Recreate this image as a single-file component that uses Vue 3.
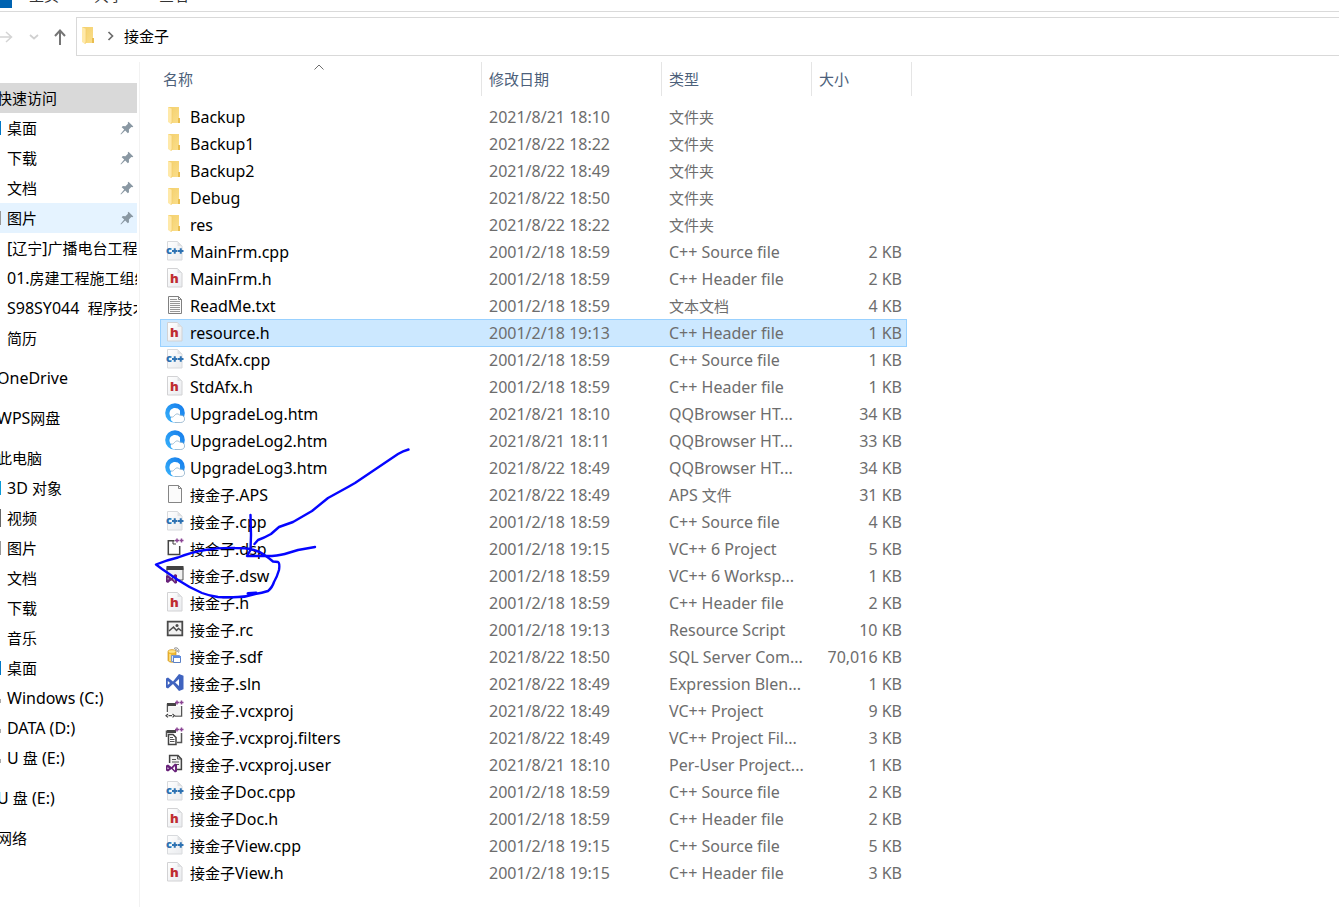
<script setup>
import { h } from 'vue'

const CJK = /([\u3000-\u9fff\uff00-\uffef]+)/

const Label = (props) =>
  h(
    'span',
    { class: 'label' },
    props.text
      .split(CJK)
      .filter((part) => part)
      .map((part) => h('span', { class: CJK.test(part) ? 'han' : 'latin' }, part))
  )
Label.props = ['text']

const places = [
  { text: '快速访问', root: true, state: 'current' },
  { text: '桌面', edge: 'blue', pin: true },
  { text: '下载', pin: true },
  { text: '文档', pin: true },
  { text: '图片', edge: 'grey', pin: true, state: 'hover' },
  { text: '[辽宁]广播电台工程施工' },
  { text: '01.房建工程施工组织设计' },
  { text: 'S98SY044  程序技术文件' },
  { text: '简历' },
  { text: 'OneDrive', root: true, gap: true },
  { text: 'WPS网盘', root: true, gap: true },
  { text: '此电脑', root: true, gap: true },
  { text: '3D 对象', edge: 'cyan' },
  { text: '视频', edge: 'dark' },
  { text: '图片', edge: 'grey' },
  { text: '文档' },
  { text: '下载' },
  { text: '音乐' },
  { text: '桌面', edge: 'blue' },
  { text: 'Windows (C:)', edge: 'drive' },
  { text: 'DATA (D:)', edge: 'drive' },
  { text: 'U 盘 (E:)', edge: 'drive' },
  { text: 'U 盘 (E:)', root: true, gap: true },
  { text: '网络', root: true, gap: true }
]

const columns = [
  { text: '名称', key: 'name' },
  { text: '修改日期', key: 'date' },
  { text: '类型', key: 'type' },
  { text: '大小', key: 'size' }
]

const files = [
  ['folder', 'Backup', '2021/8/21 18:10', '文件夹', ''],
  ['folder', 'Backup1', '2021/8/22 18:22', '文件夹', ''],
  ['folder', 'Backup2', '2021/8/22 18:49', '文件夹', ''],
  ['folder', 'Debug', '2021/8/22 18:50', '文件夹', ''],
  ['folder', 'res', '2021/8/22 18:22', '文件夹', ''],
  ['cpp', 'MainFrm.cpp', '2001/2/18 18:59', 'C++ Source file', '2 KB'],
  ['header', 'MainFrm.h', '2001/2/18 18:59', 'C++ Header file', '2 KB'],
  ['text', 'ReadMe.txt', '2001/2/18 18:59', '文本文档', '4 KB'],
  ['header', 'resource.h', '2001/2/18 19:13', 'C++ Header file', '1 KB'],
  ['cpp', 'StdAfx.cpp', '2001/2/18 18:59', 'C++ Source file', '1 KB'],
  ['header', 'StdAfx.h', '2001/2/18 18:59', 'C++ Header file', '1 KB'],
  ['browser', 'UpgradeLog.htm', '2021/8/21 18:10', 'QQBrowser HT...', '34 KB'],
  ['browser', 'UpgradeLog2.htm', '2021/8/21 18:11', 'QQBrowser HT...', '33 KB'],
  ['browser', 'UpgradeLog3.htm', '2021/8/22 18:49', 'QQBrowser HT...', '34 KB'],
  ['blank', '接金子.APS', '2021/8/22 18:49', 'APS 文件', '31 KB'],
  ['cpp', '接金子.cpp', '2001/2/18 18:59', 'C++ Source file', '4 KB'],
  ['dsp', '接金子.dsp', '2001/2/18 19:15', 'VC++ 6 Project', '5 KB'],
  ['dsw', '接金子.dsw', '2001/2/18 18:59', 'VC++ 6 Worksp...', '1 KB'],
  ['header', '接金子.h', '2001/2/18 18:59', 'C++ Header file', '2 KB'],
  ['resource', '接金子.rc', '2001/2/18 19:13', 'Resource Script', '10 KB'],
  ['database', '接金子.sdf', '2021/8/22 18:50', 'SQL Server Com...', '70,016 KB'],
  ['solution', '接金子.sln', '2021/8/22 18:49', 'Expression Blen...', '1 KB'],
  ['project', '接金子.vcxproj', '2021/8/22 18:49', 'VC++ Project', '9 KB'],
  ['filters', '接金子.vcxproj.filters', '2021/8/22 18:49', 'VC++ Project Fil...', '3 KB'],
  ['user', '接金子.vcxproj.user', '2021/8/21 18:10', 'Per-User Project...', '1 KB'],
  ['cpp', '接金子Doc.cpp', '2001/2/18 18:59', 'C++ Source file', '2 KB'],
  ['header', '接金子Doc.h', '2001/2/18 18:59', 'C++ Header file', '2 KB'],
  ['cpp', '接金子View.cpp', '2001/2/18 19:15', 'C++ Source file', '5 KB'],
  ['header', '接金子View.h', '2001/2/18 19:15', 'C++ Header file', '3 KB']
].map(([icon, name, date, type, size]) => ({ icon, name, date, type, size }))

const selected = 'resource.h'
</script>

<template>
  <div class="explorer">
    <svg class="sprite" aria-hidden="true">
      <defs>
        <linearGradient id="g-folder" x1="0" x2="1" y1="0" y2="1">
          <stop offset="0" stop-color="#f3cf6c" />
          <stop offset="1" stop-color="#fbdf8c" />
        </linearGradient>
        <linearGradient id="g-sheet" x1="0" x2="1" y1="0" y2="1">
          <stop offset="0" stop-color="#ffffff" />
          <stop offset="1" stop-color="#e9ebee" />
        </linearGradient>
        <linearGradient id="g-q" x1="0" x2="1" y1="1" y2="0">
          <stop offset="0" stop-color="#39b4fb" />
          <stop offset="1" stop-color="#1378ea" />
        </linearGradient>
      </defs>
      <symbol id="folder" viewBox="0 0 20 20">
        <path d="M3 1h11v11h1v5H5z" fill="url(#g-folder)" />
        <path d="M13 12h2v5h-2z" fill="#e9bd50" />
        <path d="M3 1l4 2v13l-1 2-3-2z" fill="#ffe9a9" />
        <path d="M7 3v13l-1 2" fill="none" stroke="#f3cd68" stroke-width=".7" />
      </symbol>
      <symbol id="cpp" viewBox="0 0 20 20">
        <path d="M2.500.5h10l4.500 4.500v14H2.500z" fill="url(#g-sheet)" stroke="#d8dadd" />
        <path d="M12.500.5V5H17z" fill="#dfe1e4" />
        <text x="1" y="13" font-family="Open Sans, sans-serif" font-weight="800" font-size="11" fill="#2e72b2">c</text>
        <path d="M7 10h5.500M9.750 7.200v5.600M13 10h5.500M15.750 7.200v5.600" stroke="#2e72b2" stroke-width="2" />
      </symbol>
      <symbol id="header" viewBox="0 0 20 20">
        <path d="M2.500.5h10l4.500 4.500v14H2.500z" fill="url(#g-sheet)" stroke="#d2d2d4" />
        <path d="M12.500.5V5H17z" fill="#dfe1e4" />
        <text x="5" y="15" font-family="Open Sans, sans-serif" font-weight="800" font-size="13" fill="#bf2c31">h</text>
      </symbol>
      <symbol id="text" viewBox="0 0 20 20">
        <path d="M3.500 1.500h10l3 3v14h-13z" fill="#fbfbfb" stroke="#808080" />
        <path d="M13.500 1.500v3h3" fill="none" stroke="#808080" />
        <path d="M5 4.500h7M5 6.500h10M5 8.500h10M5 10.500h10M5 12.500h10M5 14.500h10M5 16.500h10" stroke="#979797" />
      </symbol>
      <symbol id="blank" viewBox="0 0 20 20">
        <path d="M3.500 1.500h10l3 3v14h-13z" fill="#fbfbfb" stroke="#858585" />
        <path d="M13.500 1.500v3h3" fill="none" stroke="#858585" />
      </symbol>
      <symbol id="browser" viewBox="0 0 20 20">
        <circle cx="10" cy="10" r="9.800" fill="url(#g-q)" />
        <path d="M10 5c-3.200 0-5.500 2.300-5.500 5.200 0 3.300 2.500 5.600 5.500 5.600h5V7.500C13.800 5.800 12 5 10 5z" fill="#fff" />
        <path d="M6 14.300c3 1.500 3.400-3 6-3.200 1.700-.1 2.200 1.400 3.800 1.300 2.200 0 3.800 1.500 3.800 3.700s-1.700 3.500-3.800 3.500H9.500C7 19 5 17 6 14.300z" fill="#fff" />
        <path d="M6 13.800c2.800 1.500 3.400-2.700 6-2.900 1.700-.1 2.200 1.400 3.800 1.300 2.200 0 3.800 1.500 3.800 3.700s-1.700 3.600-3.800 3.600h-6" fill="none" stroke="#8daec9" stroke-width=".8" />
      </symbol>
      <symbol id="dsp" viewBox="0 0 20 20">
        <path d="M9.500 2.800H3.300v13.700h11.400V8" fill="none" stroke="#444" stroke-width="1.500" />
        <path d="M8 2v4h3" fill="none" stroke="#444" />
        <path d="M10 2.500h4M12 .5v4M14.500 2.500h4M16.500.5v4" stroke="#8b4594" stroke-width="1.500" />
      </symbol>
      <symbol id="dsw" viewBox="0 0 20 20">
        <path d="M2 2.500h16v12.500H2z" fill="#f1f1f1" stroke="#555" />
        <path d="M1.500 1h17v4h-17z" fill="#424242" />
        <path d="M1 11l2-1 3.500 3L10 9l2 1v8l-2 .8L6.500 15 3 18l-2-1zm1.500 1.700v2.600l1.500-1.300zM10 11.500L7.800 14l2.200 2.500z" fill="#68217a" fill-rule="evenodd" />
      </symbol>
      <symbol id="resource" viewBox="0 0 20 20">
        <path d="M2.700 2.700h14.600v13.600H2.700z" fill="#f2f2f2" stroke="#4a4a4a" stroke-width="1.800" />
        <path d="M4 12l4.500-4 3 3.500 2-2L16.500 12" fill="none" stroke="#4a4a4a" stroke-width="1.500" />
        <circle cx="12" cy="6.500" r="1.500" fill="#4a4a4a" />
      </symbol>
      <symbol id="database" viewBox="0 0 20 20">
        <path d="M3 5.500C3 3 11 3 11 5.500V15c-2 2-7 1.500-8-.5z" fill="#f0b932" stroke="#cf9520" stroke-width=".7" />
        <ellipse cx="7" cy="5.500" rx="3.500" ry="1.300" fill="#ffe58a" />
        <path d="M5 8v7" stroke="#ffe28b" stroke-width="1.500" />
        <path d="M6.500 9.500h8v6h-8z" fill="#dce8f8" stroke="#7b96c8" />
        <path d="M8.500 10.500h7v6h-7z" fill="#fff" stroke="#5b80c5" />
        <path d="M8 10h8v2H8z" fill="#5c8be0" />
        <path d="M9 2.500c3-2 6 1 4.500 4M10 4c1.500-1 3 .5 2 2" fill="none" stroke="#777" stroke-width=".9" />
      </symbol>
      <symbol id="solution" viewBox="0 0 20 20">
        <path d="M1 5.500l2-1 5 4L14 1l4.500 1.800v13.400L14 18l-6-7-5 4.500-2-1zM2.800 8v4L5 10zM14 6l-3.800 3.500L14 13z" fill="#3f63bf" fill-rule="evenodd" />
      </symbol>
      <symbol id="project" viewBox="0 0 20 20">
        <path d="M2.500 12V4.500H11M16.500 6v10H10" fill="none" stroke="#555" stroke-width="1.500" />
        <path d="M3 6.500h13v9H3z" fill="#f2f2f2" />
        <path d="M2 3h9v3H2z" fill="#444" />
        <path d="M10 2.500h4M12 .5v4M14.500 2.500h4M16.500.5v4" stroke="#8b4594" stroke-width="1.500" />
        <path d="M1 13.500h9v4H1z" fill="#fff" />
        <path d="M3 14l-2 1.700 2 1.700M7.500 14l2 1.700-2 1.700M3.500 15.700h3.500" fill="none" stroke="#444" stroke-width="1.200" />
      </symbol>
      <symbol id="filters" viewBox="0 0 20 20">
        <path d="M2 3h9v3H2z" fill="#444" />
        <path d="M1.500 3.500V10M12 15.500h4.500V6" fill="none" stroke="#555" stroke-width="1.500" />
        <path d="M10 2.500h4M12 .5v4M14.500 2.500h4M16.500.5v4" stroke="#8b4594" stroke-width="1.500" />
        <path d="M3.500 7.500H8l3 3v7H3.500z" fill="#fff" stroke="#444" stroke-width="1.500" />
        <path d="M5 10.500h3M5 12.500h4.500M5 14.500h4.500" stroke="#555" />
      </symbol>
      <symbol id="user" viewBox="0 0 20 20">
        <path d="M4.600 9V1.600h8.400l3.400 3.400v10.400H11" fill="#f4f4f4" stroke="#444" stroke-width="1.500" />
        <path d="M12.500 1.500V5H16M7 5.500h4M7 8h7M10 10.500h4" fill="none" stroke="#555" />
        <path d="M1 11.500l2-1 3.500 2.500L10 9.500l2 1v7l-2 1-3.500-3.500-3.500 2.500-2-1zm1.500 1.700v2.100L4 14.200zM10 12l-2.200 2.200L10 16.500z" fill="#68217a" fill-rule="evenodd" />
      </symbol>
      <symbol id="pin" viewBox="0 0 14 14">
        <path d="M8.500.7l4.800 4.700-1 .9-1-.2-2.400 2.500.1 2.600-1.200 1-2.600-2.600L1 13.500.5 13l3.700-4.400-2.500-2.400 1.100-1.100 2.600.1L8 2.700l-.3-1z" fill="#8a98a3" />
      </symbol>
    </svg>

    <nav class="ribbon" aria-label="功能区">
      <span class="file-tab"></span>
      <a class="tab" href="#">主页</a>
      <a class="tab" href="#">共享</a>
      <a class="tab" href="#">查看</a>
    </nav>

    <div class="toolbar">
      <button class="tool forward" type="button" aria-label="前进">
        <svg width="14" height="14" viewBox="0 0 14 14"><path d="M0 7h11M6 2l5.500 5L6 12" fill="none" stroke="#d4d4d4" stroke-width="1.500" /></svg>
      </button>
      <button class="tool recent" type="button" aria-label="最近位置">
        <svg width="10" height="6" viewBox="0 0 10 6"><path d="M1 1l4 3.500L9 1" fill="none" stroke="#d0d0d0" stroke-width="1.700" /></svg>
      </button>
      <button class="tool up" type="button" aria-label="向上">
        <svg width="12" height="16" viewBox="0 0 12 16"><path d="M6 16V1.500M1 7l5-5.500L11 7" fill="none" stroke="#757575" stroke-width="2" /></svg>
      </button>
      <div class="address">
        <svg class="icon"><use href="#folder" /></svg>
        <svg class="crumb-arrow" width="7" height="10" viewBox="0 0 7 10"><path d="M1.500 1l4 4-4 4" fill="none" stroke="#6b6b6b" stroke-width="1.700" /></svg>
        <a class="crumb" href="#"><Label text="接金子" /></a>
      </div>
    </div>

    <div class="body">
      <nav class="places" aria-label="导航窗格">
        <a
          v-for="(place, i) in places"
          :key="i"
          href="#"
          class="place"
          :class="[place.state, { root: place.root, gap: place.gap }]"
        >
          <span v-if="!place.root" class="edge" :class="place.edge"></span>
          <Label :text="place.text" />
          <svg v-if="place.pin" class="pin"><use href="#pin" /></svg>
        </a>
      </nav>

      <main class="list">
        <table>
          <colgroup>
            <col v-for="c in columns" :key="c.key" :class="c.key" />
          </colgroup>
          <thead>
            <tr>
              <th v-for="c in columns" :key="c.key" scope="col">
                <Label :text="c.text" />
                <svg v-if="c.key === 'name'" class="sort" width="10" height="6" viewBox="0 0 10 6"><path d="M.5 5.500L5 1l4.500 4.500" fill="none" stroke="#6d6d6d" /></svg>
              </th>
            </tr>
          </thead>
          <tbody>
            <tr v-for="f in files" :key="f.name" :class="{ selected: f.name === selected }">
              <td>
                <div class="cell name">
                  <svg class="icon"><use :href="'#' + f.icon" /></svg>
                  <Label :text="f.name" />
                </div>
              </td>
              <td><div class="cell"><Label :text="f.date" /></div></td>
              <td><div class="cell"><Label :text="f.type" /></div></td>
              <td class="end"><div class="cell size"><Label :text="f.size" /></div></td>
            </tr>
          </tbody>
        </table>

        <svg class="ink" width="270" height="160" viewBox="150 440 270 160" aria-hidden="true">
          <g fill="none" stroke="#0505ff" stroke-width="2.400" stroke-linecap="round" stroke-linejoin="round">
            <path d="M408.500 449.500Q403 451 398 454L355 483 348 487 328 498 312 511 293 522 279 527 271 534Q264 538 258 540L254.500 544" />
            <path d="M250.500 515L251 535 250.500 550 247 556H272Q282 555 288 553L298 550 315 547" />
            <path d="M273 561.500L278 562Q280 563 279 570 277 577 274 582 272 588 268 591 262 593 255 594 246 597 238 597 228 597.500 218 597 210 596 202 593 190 588 178 580L162 569Q158 566 156 564.500 167 560 178 557.500 192 552 205 550 220 547.500 235 548 246 548 252 549.500 259 551 263 554 269 558 273 561.500" />
            <path d="M248 593.500L256 593" stroke-width="3" />
          </g>
        </svg>
      </main>
    </div>
  </div>
</template>

<style>
body {
  background: #fff;
}
</style>

<style scoped>
.explorer {
  font-family: "Noto Sans", "Noto Sans CJK SC", sans-serif;
  font-size: 16px;
  color: #000;
  min-height: 100vh;
  display: flex;
  flex-direction: column;
  overflow: hidden;
}
.sprite {
  position: absolute;
  width: 0;
  height: 0;
}
a {
  color: inherit;
  text-decoration: none;
}
.label {
  white-space: pre;
}
:deep(.han) {
  font-family: "Noto Sans CJK SC", sans-serif;
  font-size: 15px;
}
.icon {
  width: 20px;
  height: 20px;
  margin-bottom: 2px;
  flex: none;
}
.ribbon {
  height: 11px;
  border-bottom: 1px solid #dadada;
  display: flex;
  align-items: flex-start;
  gap: 35px;
  overflow: hidden;
}
.file-tab {
  width: 12px;
  height: 8px;
  margin-right: -18px;
  background: #0063b1;
}
.tab {
  font: 15px/20px "Noto Sans CJK SC", sans-serif;
  margin-top: -15px;
  color: #333;
}
.toolbar {
  display: flex;
  align-items: center;
  padding-top: 5px;
}
.tool {
  border: 0;
  padding: 0;
  background: none;
  display: flex;
  justify-content: flex-start;
}
.forward {
  width: 29px;
}
.recent {
  width: 25px;
}
.up {
  width: 22px;
}
.address {
  flex: 1;
  height: 37px;
  box-sizing: content-box;
  border: 1px solid #d9d9d9;
  border-right: 0;
  display: flex;
  align-items: center;
  padding-left: 2px;
}
.crumb-arrow {
  margin: 0 10px 2px 8px;
}
.crumb {
  margin-bottom: 2px;
}
.body {
  flex: 1;
  display: flex;
  padding-top: 6px;
}
.places {
  width: 140px;
  flex: none;
  box-sizing: border-box;
  padding: 21px 2px 0 0;
  border-right: 1px solid #f2f2f2;
}
.place {
  height: 30px;
  display: flex;
  align-items: center;
  overflow: hidden;
}
.gap {
  margin-top: 10px;
}
.root .label {
  margin-left: -3px;
}
.current {
  background: #d9d9d9;
}
.hover {
  background: #e5f3ff;
}
.edge {
  width: 1px;
  height: 14px;
  margin-right: 6px;
  flex: none;
}
.blue {
  background: #0078c8;
}
.cyan {
  background: #0a9bd8;
}
.grey {
  background: #999;
}
.dark {
  height: 18px;
  background: #666;
}
.drive {
  height: 4px;
  margin-top: 6px;
  background: #aaa;
}
.pin {
  width: 14px;
  height: 14px;
  margin: 0 3px 0 auto;
  flex: none;
}
.list {
  flex: 1;
  min-width: 0;
  padding-left: 20px;
  position: relative;
}
table {
  width: 752px;
  table-layout: fixed;
  border-collapse: separate;
  border-spacing: 0;
}
col.name {
  width: 322px;
}
col.date {
  width: 180px;
}
col.type {
  width: 150px;
}
col.size {
  width: 100px;
}
th {
  height: 34px;
  padding: 0 0 0 7px;
  border-right: 1px solid #e5e5e5;
  text-align: left;
  font-weight: 400;
  color: #4c607a;
  position: relative;
}
th:first-child {
  padding-left: 3px;
}
.sort {
  position: absolute;
  top: 2px;
  left: 50%;
  margin-left: -7px;
}
tbody::before {
  content: "";
  display: block;
  height: 7px;
}
td {
  padding: 0;
  height: 27px;
  color: #6d6d6d;
}
.end {
  padding-right: 5px;
}
.cell {
  box-sizing: border-box;
  height: 27px;
  padding-left: 7px;
  display: flex;
  align-items: center;
  overflow: hidden;
  border: 0 solid #99d1ff;
}
.cell.name {
  padding-left: 5px;
  gap: 5px;
  color: #000;
}
.cell.size {
  padding: 0 5px 0 0;
  justify-content: flex-end;
}
.selected .cell {
  height: 28px;
  margin-bottom: -1px;
  background: #cce8ff;
  border-width: 1px 0;
}
.selected .cell.name {
  border-left-width: 1px;
  padding-left: 4px;
}
.selected .cell.size {
  border-right-width: 1px;
  padding-right: 4px;
}
.ink {
  position: absolute;
  left: 10px;
  top: 378px;
  pointer-events: none;
}
</style>
